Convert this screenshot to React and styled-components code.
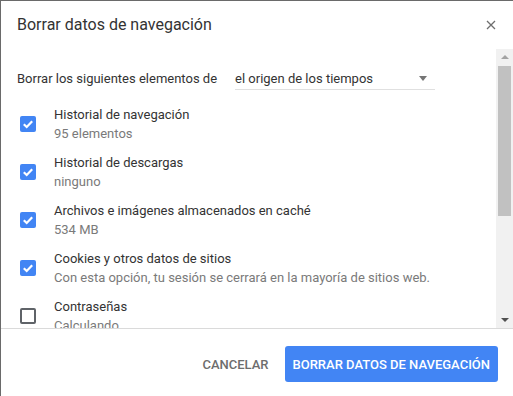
import React from 'react'
import styled, { createGlobalStyle } from 'styled-components'

const GlobalStyle = createGlobalStyle`
  html, body {
    margin: 0;
    padding: 0;
    background: #2d2d2d;
  }
  body {
    font-family: Roboto, "Liberation Sans", Arial, sans-serif;
    -webkit-font-smoothing: antialiased;
  }
`

const Dialog = styled.div`
  width: 512px;
  height: 395px;
  display: flex;
  flex-direction: column;
  background: #fff;
  border-left: 1px solid #6a6a6a;
  border-top: 1px solid #6a6a6a;
  overflow: hidden;
`

const Header = styled.div`
  height: 48px;
  display: flex;
  align-items: flex-start;
  justify-content: space-between;
  padding: 14px 0 0 16px;
  box-sizing: border-box;
`

const Title = styled.h1`
  margin: 0;
  font-size: 16px;
  font-weight: 400;
  color: #333;
  line-height: 19px;
`

const Close = styled.button`
  width: 20px;
  height: 20px;
  margin: 0 12px 0 0;
  padding: 0;
  border: 0;
  background: none;
  display: flex;
  align-items: center;
  justify-content: center;
  cursor: pointer;
`

const Body = styled.div`
  height: 279px;
  display: flex;
  border-bottom: 1px solid #dadada;
`

const Content = styled.div`
  flex: 1;
  overflow: hidden;
  padding: 22px 0 0 16px;
  box-sizing: border-box;
`

const SelectRow = styled.div`
  display: flex;
  align-items: flex-start;
  gap: 18px;
  font-size: 13px;
  color: #333;
  margin-bottom: 10px;
`

const SelectLabel = styled.span`
  line-height: 15px;
`

const Dropdown = styled.div`
  width: 200px;
  display: flex;
  align-items: center;
  justify-content: space-between;
  line-height: 15px;
  padding-bottom: 3px;
  border-bottom: 1px solid #e0e0e0;
`

const Caret = styled.span`
  width: 0;
  height: 0;
  margin-right: 8px;
  border-left: 4.5px solid transparent;
  border-right: 4.5px solid transparent;
  border-top: 5px solid #757575;
`

const Row = styled.div`
  display: flex;
  align-items: center;
  gap: 18px;
  padding: 5px 0 5px 3px;
`

const Box = styled.span`
  width: 16px;
  height: 16px;
  flex: none;
  box-sizing: border-box;
  border-radius: 2px;
  display: flex;
  align-items: center;
  justify-content: center;
  background: ${p => (p.checked ? '#4285f4' : '#fff')};
  border: ${p => (p.checked ? '0' : '2px solid #5f6368')};
`

const Texts = styled.div`
  display: flex;
  flex-direction: column;
  font-size: 13px;
  line-height: 19px;
  white-space: nowrap;
`

const Label = styled.span`
  color: #333;
`

const Sub = styled.span`
  color: #7a7a7a;
`

const Scrollbar = styled.div`
  width: 17px;
  flex: none;
  background: #f1f1f1;
  display: flex;
  flex-direction: column;
  align-items: center;
`

const Arrow = styled.span`
  width: 0;
  height: 0;
  margin: 6px 0;
  border-left: 4px solid transparent;
  border-right: 4px solid transparent;
  ${p =>
    p.up
      ? 'border-bottom: 4px solid #a3a3a3;'
      : 'border-top: 4px solid #505050;'}
`

const Thumb = styled.div`
  width: 13px;
  height: 150px;
  margin-top: 1px;
  background: #c1c1c1;
`

const Spacer = styled.div`
  flex: 1;
`

const Footer = styled.div`
  display: flex;
  justify-content: flex-end;
  align-items: center;
  padding: 17px 15px 0 0;
  gap: 8px;
`

const Button = styled.button`
  height: 36px;
  padding: 0 8px;
  border: 0;
  border-radius: 3px;
  font-family: inherit;
  font-size: 13px;
  font-weight: 500;
  letter-spacing: 0;
  text-transform: uppercase;
  cursor: pointer;
  background: ${p => (p.primary ? '#4285f4' : 'transparent')};
  color: ${p => (p.primary ? '#fff' : '#6d6d6d')};
`

const items = [
  { label: 'Historial de navegación', sub: '95 elementos', checked: true },
  { label: 'Historial de descargas', sub: 'ninguno', checked: true },
  { label: 'Archivos e imágenes almacenados en caché', sub: '534 MB', checked: true },
  {
    label: 'Cookies y otros datos de sitios',
    sub: 'Con esta opción, tu sesión se cerrará en la mayoría de sitios web.',
    checked: true,
  },
  { label: 'Contraseñas', sub: 'Calculando...', checked: false },
]

const Check = () => (
  <svg width='12' height='12' viewBox='0 0 12 12'>
    <path d='M1.8 6.2 L4.7 9 L10.2 3.3' fill='none' stroke='#fff' strokeWidth='2.2' />
  </svg>
)

const App = () => {
  return (
    <>
      <GlobalStyle />
      <Dialog>
        <Header>
          <Title>Borrar datos de navegación</Title>
          <Close aria-label='Cerrar'>
            <svg width='10' height='10' viewBox='0 0 10 10'>
              <path d='M1 1 L9 9 M9 1 L1 9' stroke='#6e6e6e' strokeWidth='1.3' />
            </svg>
          </Close>
        </Header>
        <Body>
          <Content>
            <SelectRow>
              <SelectLabel>Borrar los siguientes elementos de</SelectLabel>
              <Dropdown>
                el origen de los tiempos
                <Caret />
              </Dropdown>
            </SelectRow>
            {items.map(item => (
              <Row key={item.label}>
                <Box checked={item.checked}>{item.checked && <Check />}</Box>
                <Texts>
                  <Label>{item.label}</Label>
                  <Sub>{item.sub}</Sub>
                </Texts>
              </Row>
            ))}
          </Content>
          <Scrollbar>
            <Arrow up />
            <Thumb />
            <Spacer />
            <Arrow />
          </Scrollbar>
        </Body>
        <Footer>
          <Button>Cancelar</Button>
          <Button primary>Borrar datos de navegación</Button>
        </Footer>
      </Dialog>
    </>
  )
}

export default App
